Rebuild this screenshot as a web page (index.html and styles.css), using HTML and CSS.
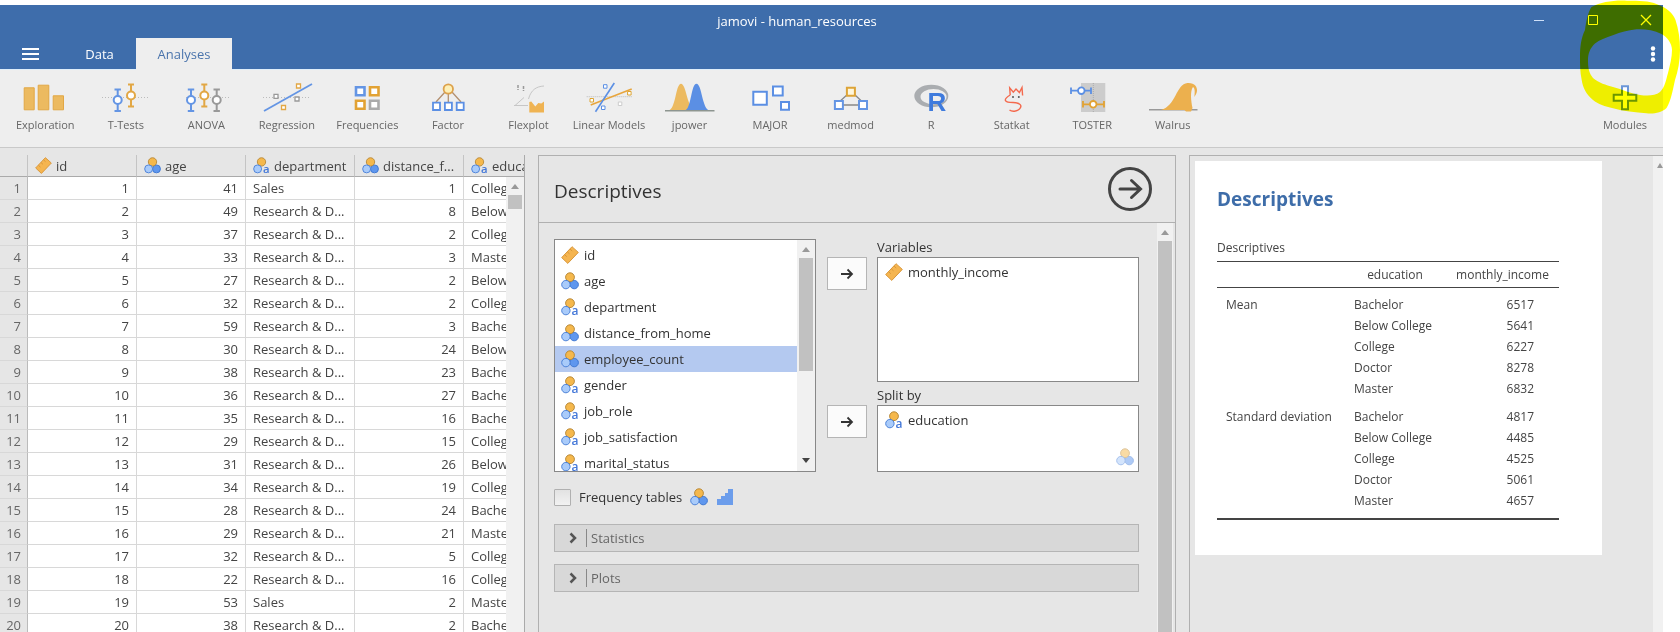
FILE: index.html
```html
<!DOCTYPE html>
<html lang="en">
<head>
<meta charset="utf-8">
<title>jamovi - human_resources</title>
<link rel="stylesheet" href="styles.css">
</head>
<body>
<svg class="defs" aria-hidden="true">
  <symbol id="nominal" viewBox="0 0 18 18">
    <circle cx="13.2" cy="12.6" r="4.2" fill="#5f97ee" stroke="#3f78d2"/>
    <circle cx="9" cy="5.2" r="4.4" fill="#f5b84c" stroke="#b98a3a"/>
    <circle cx="4.9" cy="12.6" r="4.2" fill="#a9cbfa" stroke="#4c82d8"/>
  </symbol>
  <symbol id="nominal-text" viewBox="0 0 18 18">
    <circle cx="9" cy="5.2" r="4.4" fill="#f5b84c" stroke="#b98a3a"/>
    <circle cx="4.900" cy="12.600" r="4.200" fill="#a9cbfa" stroke="#4c82d8"/>
    <text x="10.500" y="17" class="icon-a">a</text>
  </symbol>
  <symbol id="continuous" viewBox="0 0 18 18">
    <path d="M.7 11.600 11 .7l6.300 5.700L6.800 17.400z" fill="#f5b550" stroke="#d9973a"/>
    <path d="M3.600 8.700l2.200 2M6.300 5.800l2.200 2M9 3l2.200 2" stroke="#d9973a" fill="none"/>
  </symbol>
  <symbol id="ordinal" viewBox="0 0 18 18">
    <path d="M1 17v-6h4V8h4V5h3V1h5v16z" fill="#6c9deb"/>
  </symbol>
  <symbol id="arrow" viewBox="0 0 14 12">
    <path d="M1 6h11M7.5 1.5 12 6l-4.500 4.500" fill="none" stroke="#333" stroke-width="1.800"/>
  </symbol>
</svg>

<div class="app">
  <header class="top">
    <div class="titlebar">
      <h1 class="title">jamovi - human_resources</h1>
      <button class="win" aria-label="Minimize"><svg width="12" height="12"><path d="M1 6.500h10" stroke="#cfe0f8"/></svg></button>
      <button class="win" aria-label="Maximize"><svg width="12" height="12"><path d="M1.500 1.500h9v9h-9z" fill="none" stroke="#fff"/></svg></button>
      <button class="win close" aria-label="Close"><svg width="12" height="12"><path d="M1 1l10 10M11 1 1 11" stroke="#fff" stroke-width="1.300"/></svg></button>
    </div>
    <nav class="tabs">
      <button class="menu" aria-label="Menu"><svg width="17" height="12"><path d="M0 1h17M0 6h17M0 11h17" stroke="#fff" stroke-width="2"/></svg></button>
      <button class="tab">Data</button>
      <button class="tab active">Analyses</button>
      <button class="more" aria-label="More options"><svg width="6" height="16" fill="#fff"><circle cx="3" cy="2.500" r="2.200"/><circle cx="3" cy="8" r="2.200"/><circle cx="3" cy="13.500" r="2.200"/></svg></button>
    </nav>
  </header>

  <div class="toolbar">
    <div class="tools">
      <button class="tool"><svg viewBox="0 0 50 30"><g fill="#ecba60" stroke="#e2a744"><path d="M4.200 4.800h10v22h-10zM18.200 2.200h10.600v24.600H18.200zM33.200 12.800h10.300v14H33.200z"/></g></svg>Exploration</button>
      <button class="tool"><svg viewBox="0 0 50 30"><path d="M1 14.500h48" stroke="#bbb" stroke-dasharray="1 2"/><g fill="#fff" stroke="#6495e4" stroke-width="2"><path d="M16.700 6v22M13.500 6.500h6.400M13.500 28h6.400"/><circle cx="16.700" cy="17" r="4"/></g><g fill="#fff" stroke="#e2a744" stroke-width="2"><path d="M30 1.500v22M27 1.500h6M27 23.500h6"/><circle cx="30" cy="12.500" r="4"/></g></svg>T-Tests</button>
      <button class="tool"><svg viewBox="0 0 50 30"><path d="M5 14.500h44" stroke="#bbb" stroke-dasharray="1 2"/><g fill="#fff" stroke="#6495e4" stroke-width="2"><path d="M10 6v22M6.800 6.500h6.400M6.800 28h6.400"/><circle cx="10" cy="17" r="4"/></g><g fill="#fff" stroke="#e2a744" stroke-width="2"><path d="M23.300 1.500v22M20.300 1.500h6M20.300 23.500h6"/><circle cx="23.300" cy="12.500" r="4"/></g><g fill="#fff" stroke="#999" stroke-width="2"><path d="M35.700 6v22M32.500 6.500h6.400M32.500 28h6.400"/><circle cx="35.700" cy="17" r="4"/></g></svg>ANOVA</button>
      <button class="tool"><svg viewBox="0 0 50 30"><path d="M1 14.500h48" stroke="#bbb" stroke-dasharray="1 2"/><path d="M2 28 50 1" stroke="#6495e4" stroke-width="1.800"/><g fill="#fff" stroke-width="1.300"><path d="M34.500 1h4v4h-4zM19.500 22.500h4v4h-4z" stroke="#e2a744"/><path d="M12 11.300h4v4h-4zM33 14h4v4h-4z" stroke="#999"/></g></svg>Regression</button>
      <button class="tool"><svg viewBox="0 0 50 30"><g fill="#fff" stroke-width="2.600"><path d="M14 4.300h8.500v8H14z" stroke="#6495e4"/><path d="M28 4.300h8.500v8H28zM14 17.800h8.500v8H14z" stroke="#e2a233"/><path d="M28 17.800h8.500v8H28z" stroke="#aaa"/></g></svg>Frequencies</button>
      <button class="tool"><svg viewBox="0 0 50 30"><path d="M22 9 13 19M25.300 10v9M29 9l9 10" stroke="#b39070" stroke-width="1.300"/><circle cx="25.300" cy="6" r="4.700" fill="#fdf0b8" stroke="#dda24c" stroke-width="1.800"/><path d="M10 19.700h7v7.300h-7zM21.900 19.700h7v7.300h-7zM33.700 19.700h7v7.300h-7z" fill="#fff" stroke="#5b8fe4" stroke-width="1.800"/></svg>Factor</button>
      <button class="tool"><svg viewBox="0 0 50 30"><path d="M15 2v5M20.500 3v5" stroke="#999" stroke-width="1.500" stroke-dasharray="3 1"/><path d="M25.500 16C28 7 33 3.500 41 3M11 22.500h14M12 22.500l9-8" fill="none" stroke="#c6c6c6"/><path d="M26.300 19l2-.5 4 5 3-3.500 3 .5 2.700-2v11H26.300z" fill="#efb352"/></svg>Flexplot</button>
      <button class="tool"><svg viewBox="0 0 50 30"><path d="M2.700 13.700h45" stroke="#bbb" stroke-dasharray="1 1"/><path d="M6.700 22 47.700 6" stroke="#e8a53c" stroke-width="1.500"/><path d="M30.300 0 11.500 28.700" stroke="#5b8fe4" stroke-width="1.600"/><g fill="#fff"><path d="M19.500 1.700h3.500v3.500h-3.500zM17.500 23h3.500v3.500h-3.500z" stroke="#5b8fe4"/><path d="M6 15.500h3.500v3.500H6zM43.600 8.500h3.500v3.500h-3.500z" stroke="#dca534"/><path d="M34.300 19h3.500v3.500h-3.500z" stroke="#ccc"/></g></svg>Linear Models</button>
      <button class="tool"><svg viewBox="0 0 50 30"><path d="M3 27.500C11 27 10.500.7 16 .7S22 27 31 27.500z" fill="#ecba60"/><path d="M20 27.500C26.500 25 26 .7 31.500.7S37 27 45 27.500z" fill="#5b8fe4"/><path d="M0 27.700h49.500" stroke="#8d9590" stroke-width="1.500"/></svg>jpower</button>
      <button class="tool"><svg viewBox="0 0 50 30"><g fill="#fff" stroke="#5b8fe4" stroke-width="2"><path d="M8.300 8.700h13.500v13H8.300zM28 3.600h9.700v9H28zM36 19h8v7.700h-8z"/></g></svg>MAJOR</button>
      <button class="tool"><svg viewBox="0 0 50 30"><path d="M22 11 12 20M28 11l9.500 9M16 22h18" stroke="#888" stroke-width="1.300"/><path d="M20.900 4.700h8v8h-8z" fill="#fff7dc" stroke="#dda437" stroke-width="2"/><path d="M8.900 18h8v8h-8zM33 18h8v8h-8z" fill="#fff" stroke="#6495e4" stroke-width="2"/></svg>medmod</button>
      <button class="tool"><svg viewBox="0 0 50 30"><path fill="#aaadb0" fill-rule="evenodd" d="M8.300 13a17 11.300 0 1 0 34 0a17 11.300 0 1 0-34 0zM14.500 13.700a13 7.600 0 1 1 26 0a13 7.600 0 1 1-26 0z"/><text x="21.500" y="28" class="icon-r">R</text></svg>R</button>
      <button class="tool"><svg viewBox="0 0 50 30"><path d="M23.200 12 22.700 4.800l3.600 4.400L29 6l3.400 3.500L35 4.500l.6 8M23.200 12C15 17 18 19.500 26 19.500c7.500 0 9.500 3.500 6.500 6.500-2.500 2.500-7.500 3-10 1" fill="none" stroke="#f4694d" stroke-width="1.400"/><circle cx="26" cy="14" r="1" fill="#555"/><circle cx="31.800" cy="14" r="1" fill="#555"/></svg>Statkat</button>
      <button class="tool"><svg viewBox="0 0 50 30"><path d="M14 0h24.300v29H14z" fill="#ccc"/><path d="M26.300 0v29" stroke="#aaa" stroke-dasharray="1 1"/><g fill="#fff" stroke="#5b8fe4" stroke-width="1.800"><path d="M3.700 7.700h20.600M4 4.500v6.400M24 4.500v6.400"/><circle cx="14.300" cy="7.700" r="3.300"/></g><g fill="#fff" stroke="#e2a233" stroke-width="1.800"><path d="M15.800 21.300h21.400M16 18v6.500M37 18v6.500"/><circle cx="26.200" cy="21.300" r="3.300"/></g></svg>TOSTER</button>
      <button class="tool"><svg viewBox="0 0 50 30"><path d="M1 26.700h48.500" stroke="#999" stroke-width="1.500"/><path d="M13 27C28 23 28 1 39.500 0c7-.500 10 4 9.500 8-.3 2.600-1.500 4-2.500 6 0-4 1-8-1.500-10-3 4-2 14-.5 21l-1.500 3.500h-5L36.500 27z" fill="#ecb04e"/></svg>Walrus</button>
    </div>
    <button class="tool modules"><svg viewBox="0 0 50 30"><path d="M22 3.300h6v8.500h8.300v6H28v8.500h-6v-8.500h-8.300v-6H22z" fill="#fff" stroke="#6b96d8" stroke-width="2"/></svg>Modules</button>
  </div>

  <main class="work">
    <section class="sheet">
      <div class="grid">
        <table class="data">
          <colgroup><col class="c-num"><col class="c-col"><col class="c-col"><col class="c-col"><col class="c-col"><col class="c-col"></colgroup>
          <thead><tr><th></th>
            <th><span class="var"><svg><use href="#continuous"/></svg>id</span></th>
            <th><span class="var"><svg><use href="#nominal"/></svg>age</span></th>
            <th><span class="var"><svg><use href="#nominal-text"/></svg>department</span></th>
            <th><span class="var"><svg><use href="#nominal"/></svg>distance_f...</span></th>
            <th><span class="var"><svg><use href="#nominal-text"/></svg>education</span></th></tr></thead>
          <tbody>
            <tr><th>1</th><td>1</td><td>41</td><td>Sales</td><td>1</td><td>College</td></tr>
            <tr><th>2</th><td>2</td><td>49</td><td>Research &amp; D...</td><td>8</td><td>Below College</td></tr>
            <tr><th>3</th><td>3</td><td>37</td><td>Research &amp; D...</td><td>2</td><td>College</td></tr>
            <tr><th>4</th><td>4</td><td>33</td><td>Research &amp; D...</td><td>3</td><td>Master</td></tr>
            <tr><th>5</th><td>5</td><td>27</td><td>Research &amp; D...</td><td>2</td><td>Below College</td></tr>
            <tr><th>6</th><td>6</td><td>32</td><td>Research &amp; D...</td><td>2</td><td>College</td></tr>
            <tr><th>7</th><td>7</td><td>59</td><td>Research &amp; D...</td><td>3</td><td>Bachelor</td></tr>
            <tr><th>8</th><td>8</td><td>30</td><td>Research &amp; D...</td><td>24</td><td>Below College</td></tr>
            <tr><th>9</th><td>9</td><td>38</td><td>Research &amp; D...</td><td>23</td><td>Bachelor</td></tr>
            <tr><th>10</th><td>10</td><td>36</td><td>Research &amp; D...</td><td>27</td><td>Bachelor</td></tr>
            <tr><th>11</th><td>11</td><td>35</td><td>Research &amp; D...</td><td>16</td><td>Bachelor</td></tr>
            <tr><th>12</th><td>12</td><td>29</td><td>Research &amp; D...</td><td>15</td><td>College</td></tr>
            <tr><th>13</th><td>13</td><td>31</td><td>Research &amp; D...</td><td>26</td><td>Below College</td></tr>
            <tr><th>14</th><td>14</td><td>34</td><td>Research &amp; D...</td><td>19</td><td>College</td></tr>
            <tr><th>15</th><td>15</td><td>28</td><td>Research &amp; D...</td><td>24</td><td>Bachelor</td></tr>
            <tr><th>16</th><td>16</td><td>29</td><td>Research &amp; D...</td><td>21</td><td>Master</td></tr>
            <tr><th>17</th><td>17</td><td>32</td><td>Research &amp; D...</td><td>5</td><td>College</td></tr>
            <tr><th>18</th><td>18</td><td>22</td><td>Research &amp; D...</td><td>16</td><td>College</td></tr>
            <tr><th>19</th><td>19</td><td>53</td><td>Sales</td><td>2</td><td>Master</td></tr>
            <tr><th>20</th><td>20</td><td>38</td><td>Research &amp; D...</td><td>2</td><td>Bachelor</td></tr>
          </tbody>
        </table>
        <div class="scroll sheet-scroll"><span class="up"></span><span class="thumb"></span></div>
      </div>
    </section>

    <section class="analysis">
      <header class="a-head">
        <h2>Descriptives</h2>
        <button class="go" aria-label="Close options"><svg width="44" height="44" viewBox="0 0 44 44"><circle cx="22" cy="22" r="20.500" fill="none" stroke="#444" stroke-width="3"/><path d="M12 22h20M23.500 13.500 32.500 22l-9 8.500" fill="none" stroke="#444" stroke-width="3" stroke-linecap="round"/></svg></button>
      </header>
      <div class="a-body">
        <div class="options">
          <div class="picker">
            <div class="source">
              <ul class="vars" role="listbox" aria-label="Available variables">
                <li role="option" class="var"><svg><use href="#continuous"/></svg>id</li>
                <li role="option" class="var"><svg><use href="#nominal"/></svg>age</li>
                <li role="option" class="var"><svg><use href="#nominal-text"/></svg>department</li>
                <li role="option" class="var"><svg><use href="#nominal"/></svg>distance_from_home</li>
                <li role="option" class="var selected" aria-selected="true"><svg><use href="#nominal"/></svg>employee_count</li>
                <li role="option" class="var"><svg><use href="#nominal-text"/></svg>gender</li>
                <li role="option" class="var"><svg><use href="#nominal-text"/></svg>job_role</li>
                <li role="option" class="var"><svg><use href="#nominal-text"/></svg>job_satisfaction</li>
                <li role="option" class="var"><svg><use href="#nominal-text"/></svg>marital_status</li>
              </ul>
              <div class="scroll"><span class="up"></span><span class="thumb list-thumb"></span><span class="down"></span></div>
            </div>
            <div class="targets">
              <button class="move" aria-label="Move to Variables"><svg width="14" height="12"><use href="#arrow"/></svg></button>
              <div class="target">
                <h3>Variables</h3>
                <div class="box tall"><div class="var"><svg><use href="#continuous"/></svg>monthly_income</div></div>
              </div>
              <button class="move" aria-label="Move to Split by"><svg width="14" height="12"><use href="#arrow"/></svg></button>
              <div class="target">
                <h3>Split by</h3>
                <div class="box"><div class="var"><svg><use href="#nominal-text"/></svg>education</div><svg class="allowed"><use href="#nominal"/></svg></div>
              </div>
            </div>
          </div>
          <div class="check">
            <input type="checkbox" id="freq"><label for="freq">Frequency tables</label>
            <svg><use href="#nominal"/></svg><svg><use href="#ordinal"/></svg>
          </div>
          <button class="fold"><svg width="8" height="12"><path d="M1.500 1.500 6 6l-4.500 4.500" fill="none" stroke="#555" stroke-width="2.500"/></svg><span>Statistics</span></button>
          <button class="fold"><svg width="8" height="12"><path d="M1.500 1.500 6 6l-4.500 4.500" fill="none" stroke="#555" stroke-width="2.500"/></svg><span>Plots</span></button>
        </div>
        <div class="scroll"><span class="up"></span><span class="thumb full"></span></div>
      </div>
    </section>

    <section class="results">
      <div class="page-area">
        <article class="paper">
          <h2>Descriptives</h2>
          <table class="stats">
            <caption>Descriptives</caption>
            <colgroup><col class="s-name"><col class="s-group"><col></colgroup>
            <thead><tr><th></th><th>education</th><th>monthly_income</th></tr></thead>
            <tbody>
              <tr><th>Mean</th><td>Bachelor</td><td>6517</td></tr>
              <tr><th></th><td>Below College</td><td>5641</td></tr>
              <tr><th></th><td>College</td><td>6227</td></tr>
              <tr><th></th><td>Doctor</td><td>8278</td></tr>
              <tr><th></th><td>Master</td><td>6832</td></tr>
            </tbody>
            <tbody>
              <tr><th>Standard deviation</th><td>Bachelor</td><td>4817</td></tr>
              <tr><th></th><td>Below College</td><td>4485</td></tr>
              <tr><th></th><td>College</td><td>4525</td></tr>
              <tr><th></th><td>Doctor</td><td>5061</td></tr>
              <tr><th></th><td>Master</td><td>4657</td></tr>
            </tbody>
          </table>
        </article>
      </div>
      <div class="scroll results-scroll"><span class="up"></span></div>
    </section>
  </main>
</div>
<svg class="marker" viewBox="0 0 100 120" aria-hidden="true"><path fill="#ff0" fill-rule="evenodd" d="M11.500 7C21 2 34 0 47 .700c12 0 22 0 30 3.500C87 8 93 13 95.500 20c3 9 4.500 19 4.500 30s-2 21-5 30c-2 9-4 21-8.500 28-5 5-13 6-20 5.300-11-1-23-2-33.500-5-8-2-15-4-20-8.300C6 94 3 88 1.700 80 0 72 0 64 0 57 0 47 1 38 5 30c1-8 3-18 6.500-23zM8 60c0 8 1 13 5 18 6 5 13 7 20 9 9 2.500 18 6.500 27 8 7 1 15 1 20-3 5-5 6-12 8-19 2-8 4-16 4-23 0-7-5-13-10.500-16-8-4-16-5-25-4.700-9 1-16 3-23 5.700-8 3-14 5-18.500 8.500C10 48 8 54 8 60z"/></svg>
</body>
</html>
```

FILE: styles.css
```css
* { box-sizing: border-box; }
body {
  position: relative;
  margin: 0;
  height: 100vh;
  overflow: hidden;
  padding: 5px 17px 0 0;
  background: #fff;
  color: #333;
  font: 13px/18px "Open Sans", "Noto Sans", sans-serif;
}
h1, h2, h3, ul { margin: 0; padding: 0; font-weight: 400; }
button { border: 0; padding: 0; margin: 0; background: none; color: inherit; font: inherit; }
svg { display: block; flex: none; }
.defs { position: absolute; width: 0; height: 0; }
.icon-a { font: 600 12px "Open Sans", sans-serif; fill: #4478d8; }
.icon-r { font: 700 26px "Liberation Sans", sans-serif; fill: #3f7bdd; }

.app { height: 100%; display: flex; flex-direction: column; }

.top { background: #3e6dab; color: #fff; border-bottom: 1px solid #dfeefa; }
.titlebar { display: flex; height: 33px; }
.title { flex: 1; padding: 7px 0 0 82px; text-align: center; font-size: 13px; line-height: 18px; }
.win { width: 54px; height: 30px; display: grid; place-items: center; }
.win.close { width: 43px; justify-content: start; padding-left: 20px; }
.tabs { display: flex; height: 31px; align-items: stretch; }
.menu { width: 63px; padding: 1px 0 0 22px; }
.tab { width: 73px; font-size: 13px; text-align: center; }
.tab.active { width: 96px; background: #eee; color: #4a74ac; margin-bottom: -1px; }
.more { margin-left: auto; padding-right: 7px; }

.toolbar {
  flex: none;
  display: grid;
  grid-template-columns: minmax(0, 1208fr) 374fr 76px;
  padding: 13px 0 14px 5px;
  background: #eee;
  border-bottom: 1px solid #c9c9c9;
}
.tools { display: grid; grid-template-columns: repeat(15, 1fr); }
.tool {
  display: flex;
  flex-direction: column;
  align-items: center;
  gap: 4px;
  font-size: 11px;
  line-height: 16px;
  color: #666;
  white-space: nowrap;
}
.tool svg { width: 50px; height: 30px; overflow: visible; }
.modules { grid-column: 3; }

.work {
  flex: 1;
  min-height: 0;
  display: grid;
  grid-template-columns: minmax(0, 538fr) minmax(0, 651fr) minmax(0, 474fr);
  grid-template-rows: minmax(0, 1fr);
  padding-top: 7px;
  background: #e6e6e6;
}

.var { display: flex; align-items: center; gap: 5px; white-space: nowrap; }
.var svg, .check svg { width: 18px; height: 18px; }

.scroll { width: 16px; display: flex; flex-direction: column; align-items: center; background: #f1f1f1; }
.up, .down { width: 8px; height: 5px; margin: 7px 0 6px; background: #999; }
.up { clip-path: polygon(50% 0, 100% 100%, 0 100%); }
.down { clip-path: polygon(0 0, 100% 0, 50% 100%); background: #444; margin-top: auto; margin-bottom: 8px; }
.thumb { width: 14px; height: 14px; background: #c1c1c1; }

.sheet { padding-right: 13px; min-width: 0; }
.grid { position: relative; height: 100%; overflow: hidden; border-right: 1px solid #aaa; }
.data { table-layout: fixed; width: 573px; border-collapse: separate; border-spacing: 0; color: #444; }
.c-num { width: 28px; }
.c-col { width: 109px; }
.data th, .data td { height: 23px; padding: 0 7px; border-right: 1px solid #d8d8d8; border-bottom: 1px solid #d8d8d8; font-weight: 400; white-space: nowrap; overflow: hidden; line-height: 20px; }
.data td { background: #fff; text-align: right; }
.data td:nth-child(4), .data td:nth-child(6) { text-align: left; }
.data tbody th { padding: 0 6px 0 0; background: #e6e6e6; border-right-color: #bbb; text-align: right; color: #666; }
.data thead th { height: 22px; padding: 0 7px; border-bottom-color: #aaa; border-right-color: #c4c4c4; }
.data thead .var svg { width: 17px; height: 17px; }
.data thead .var { gap: 4px; }
.sheet-scroll { position: absolute; top: 22px; right: 0; bottom: 0; width: 18px; }

.analysis { display: flex; flex-direction: column; min-width: 0; margin-right: 13px; border: 1px solid #b0b0b0; border-bottom: 0; }
.a-head { display: flex; align-items: center; justify-content: space-between; height: 67px; padding: 0 23px 0 15px; border-bottom: 1px solid #b0b0b0; }
.a-head h2 { padding-top: 3px; font-size: 19px; line-height: 28px; }
.a-body { flex: 1; min-height: 0; display: flex; justify-content: space-between; padding-right: 2px; }
.thumb.full { flex: 1; }
.options { flex: 1; padding: 16px 18px 0 15px; }
.picker { display: grid; grid-template-columns: minmax(0, 262fr) minmax(0, 312fr); gap: 11px; height: 233px; }
.source { display: flex; border: 1px solid #888; background: #fff; overflow: hidden; }
.vars { flex: 1; list-style: none; padding-top: 2px; }
.vars .var { height: 26px; padding-left: 6px; }
.vars .selected { background: #b4c9f0; }
.source .scroll { width: 18px; }
.list-thumb { height: 113px; }
.targets { display: grid; grid-template-columns: 40px minmax(0, 1fr); grid-template-rows: 148px 85px; column-gap: 10px; }
.move { width: 40px; height: 33px; margin-top: 18px; display: grid; place-items: center; background: #fbfbfb; border: 1px solid #b5b5b5; }
.target { display: flex; flex-direction: column; }
.target h3 { font-size: 13px; line-height: 16px; padding-bottom: 2px; }
.box { position: relative; height: 67px; padding: 2px 7px; background: #fff; border: 1px solid #888; }
.box.tall { height: 125px; }
.box .var { height: 24px; }
.allowed { position: absolute; right: 4px; bottom: 5px; width: 18px; height: 18px; opacity: .5; }
.check { display: flex; align-items: center; gap: 8px; height: 20px; margin: 15px 0 17px; font-size: 13px; }
.check input { appearance: none; width: 17px; height: 17px; margin: 0; border: 1px solid #b0b0b0; border-radius: 1px; background: linear-gradient(#e2e2e2, #f2f2f2); }
.fold { display: flex; align-items: center; width: 100%; height: 28px; margin-bottom: 12px; padding-left: 14px; gap: 9px; background: #d8d8d8; border: 1px solid #b5b5b5; color: #666; }
.fold span { padding-left: 4px; border-left: 1px solid #888; }

.results { display: flex; min-width: 0; border-top: 1px solid #b0b0b0; border-left: 1px solid #b0b0b0; }
.page-area { flex: 1; min-width: 0; padding: 5px 51px 0 5px; }
.paper { padding: 24px 43px 35px 22px; background: #fff; }
.paper h2 { margin-bottom: 25px; font-size: 19px; line-height: 28px; font-weight: 700; color: #3e6da9; }
.stats { width: 100%; table-layout: fixed; border-collapse: collapse; font-size: 12px; color: #444; border-bottom: 2px solid #444; }
.s-name { width: 127px; }
.s-group { width: 102px; }
.stats caption { text-align: left; line-height: 20px; padding-bottom: 3px; }
.stats th, .stats td { padding: 0; height: 21px; line-height: 20px; font-weight: 400; text-align: center; white-space: nowrap; }
.stats thead th { height: 26px; border-top: 1px solid #444; border-bottom: 1px solid #444; }
.stats tbody th { padding-left: 9px; text-align: left; }
.stats tbody td:nth-child(2) { padding-left: 10px; text-align: left; }
.stats tbody td:nth-child(3) { padding-right: 25px; text-align: right; }
.stats tbody tr:first-child th, .stats tbody tr:first-child td { height: 28px; padding-top: 7px; }
.stats tbody:last-child tr:last-child > * { height: 28px; padding-bottom: 7px; }
.results-scroll { width: 10px; align-items: flex-end; }
.results-scroll .up { width: 6px; }

.marker { position: absolute; top: 0; right: 0; width: 100px; height: 120px; mix-blend-mode: multiply; pointer-events: none; }
```
